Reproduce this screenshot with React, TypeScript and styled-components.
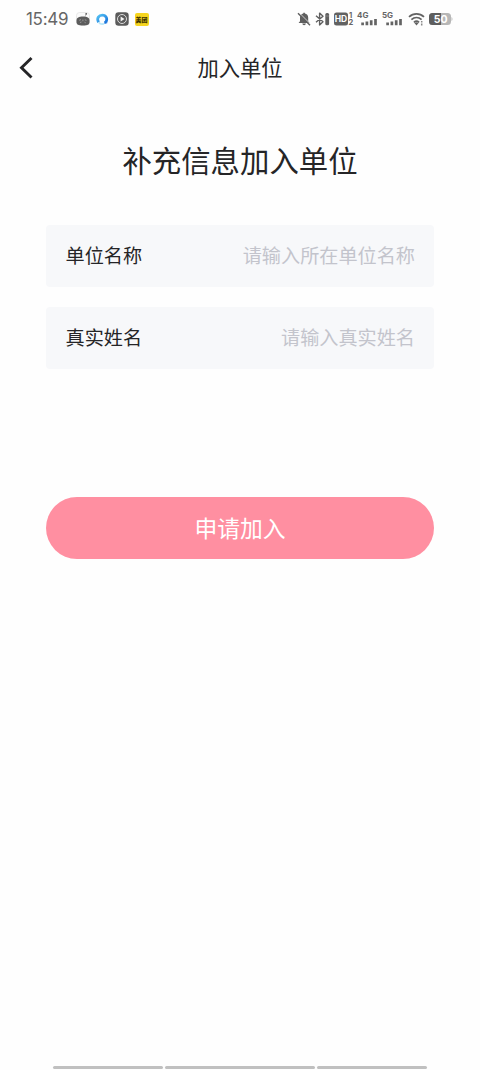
import React from "react";
import styled, { createGlobalStyle } from "styled-components";

const GlobalStyle = createGlobalStyle`
  * { box-sizing: border-box; }
  body { margin: 0; background: #fefefe; }
`;

const Screen = styled.div`
  width: 480px;
  height: 1070px;
  display: flex;
  flex-direction: column;
  background: #fefefe;
  color: #252527;
  font-family: "Noto Sans CJK SC", sans-serif;
  overflow: hidden;
`;

const StatusBar = styled.div`
  height: 38px;
  padding: 0 27px 0 26px;
  display: flex;
  align-items: center;
  justify-content: space-between;
`;

const StatusGroup = styled.div<{ $gap: number }>`
  display: flex;
  align-items: center;
  gap: ${(p) => p.$gap}px;
  svg { display: block; flex: none; }
`;

const Clock = styled.span`
  width: 43.5px;
  font: 400 17px/20px Inter, sans-serif;
  letter-spacing: -0.3px;
  color: #666;
  white-space: nowrap;
`;

const NewsBadge = styled.span`
  width: 14px;
  height: 13px;
  border-radius: 2px;
  background: #f6d51f;
  color: #3b3100;
  font: 900 6px/13px "Noto Sans CJK SC", sans-serif;
  text-align: center;
  white-space: nowrap;
`;

const NavBar = styled.header`
  height: 60px;
  padding: 0 19px;
  display: grid;
  grid-template-columns: 40px 1fr 40px;
  align-items: center;
`;

const BackButton = styled.button`
  padding: 0;
  border: 0;
  background: none;
  color: #252527;
  svg { display: block; }
`;

const NavTitle = styled.h1`
  margin: 0;
  padding-bottom: 2px;
  font-size: 21.3px;
  line-height: 32px;
  font-weight: 400;
  text-align: center;
`;

const Content = styled.main`
  flex: 1;
  padding: 39px 46px 0;
`;

const Heading = styled.h2`
  margin: 0 0 44px;
  font-size: 29.4px;
  line-height: 44px;
  font-weight: 400;
  text-align: center;
  white-space: nowrap;
`;

const Fields = styled.div`
  display: flex;
  flex-direction: column;
  gap: 20px;
`;

const Field = styled.label`
  height: 62px;
  padding: 0 19px 2px 19.5px;
  display: flex;
  align-items: center;
  justify-content: space-between;
  border-radius: 4px;
  background: #f7f8fa;
  font-size: 19.15px;
  line-height: 28px;
`;

const FieldInput = styled.input`
  width: 220px;
  padding: 0;
  border: 0;
  outline: 0;
  background: none;
  font: inherit;
  text-align: right;
  &::placeholder { color: #c3c4cc; opacity: 1; }
`;

const SubmitButton = styled.button`
  width: 100%;
  height: 62px;
  margin-top: 128px;
  padding: 0 0 1px;
  border: 0;
  border-radius: 32px;
  background: #ff8fa1;
  color: #fff;
  font: 400 22.8px/34px "Noto Sans CJK SC", sans-serif;
`;

const GestureBar = styled.footer`
  padding: 0 53px 1px;
  display: flex;
  gap: 2px;
`;

const GestureSegment = styled.span<{ $width: number }>`
  width: ${(p) => p.$width}px;
  height: 3px;
  border-radius: 2px;
  background: #c0c0c0;
`;

const RobotIcon = () => (
  <svg width="14" height="14" viewBox="0 0 14 14">
    <rect x=".5" y=".5" width="13" height="12.5" rx="3" fill="#fafafa" stroke="#e0e0e0" strokeWidth=".7" />
    <path d="M.5 8.600C.5 5.600 3 4.600 7 4.600s6.500 1 6.500 4v1.200c0 2.800-1.800 3.700-6.500 3.700s-6.500-.9-6.500-3.700z" fill="#5c5c5c" />
    <path d="m9.200 4.800.8-2.800" stroke="#999" strokeWidth=".6" />
    <circle cx="10.200" cy="1.800" r=".9" fill="#555" />
    <path d="m3.200 8.300 1.800-.7m3.800.2 1.700.5M4 10.500l1.500-.5m3 .2 1.200.6M6.900 7.500v1.800" stroke="#aaa" strokeWidth=".8" />
  </svg>
);

const BrowserIcon = () => (
  <svg width="13" height="13" viewBox="0 0 13 13">
    <defs>
      <linearGradient id="ring" x1="0" y1="0" x2="1" y2="1">
        <stop offset="0" stopColor="#55c2f3" />
        <stop offset="1" stopColor="#1773dc" />
      </linearGradient>
    </defs>
    <path d="M2.600 9.200C.2 5 3 2.200 6.300 2.200c3.800 0 5.600 3.500 3.500 7" fill="none" stroke="url(#ring)" strokeWidth="2.800" />
    <path d="M2.800 9.200c1.200 1.800 3.300 2.300 5.200 1.500" fill="none" stroke="#b9e8fa" strokeWidth="1.800" />
    <path d="m8 8 3.600 2-3 1z" fill="#1773dc" />
  </svg>
);

const PlayIcon = () => (
  <svg width="14" height="14" viewBox="0 0 14 14">
    <rect x=".3" y=".3" width="13.400" height="13.400" rx="3.200" fill="#5b5b5b" />
    <circle cx="7" cy="7" r="4.500" fill="none" stroke="#ddd" strokeWidth="1" />
    <path d="M5.600 4.600v4.800L9.500 7z" fill="#f6f6f6" />
  </svg>
);

const BellOffIcon = () => (
  <svg width="14" height="14" viewBox="0 0 14 14">
    <path d="M1.600 11 3 9.300V5.800c0-2.500 1.400-3.800 3.300-4.200V.8h1.600v.8c1.900.4 3.300 1.700 3.300 4.200v3.500L12.600 11zM5.300 11.600h3.600c-.2 1-.9 1.600-1.800 1.600s-1.600-.6-1.800-1.600" fill="#5f5f5f" />
    <path d="m2.300.9 11 11" stroke="#fefefe" strokeWidth=".8" />
    <path d="m1 1.200 12 12" stroke="#5f5f5f" strokeWidth="1.400" />
  </svg>
);

const BluetoothIcon = () => (
  <svg width="15" height="14" viewBox="0 0 15 14">
    <path d="m1 3.800 7 6-3.400 3.100V1.100L8 4.200l-7 6" fill="none" stroke="#606060" strokeWidth="1.400" strokeLinejoin="round" />
    <rect x="10.300" y="1" width="3.800" height="12.300" rx="1.500" fill="#606060" />
    <path d="M10.500 4h3.600" stroke="#999" strokeWidth=".7" />
  </svg>
);

const StatusLabel = styled.text`
  font-family: Inter, sans-serif;
  font-weight: 700;
`;

const HdIcon = () => (
  <svg width="20" height="18" viewBox="0 -2 20 18">
    <rect x="0" y=".5" width="14" height="13" rx="2.500" fill="#626262" />
    <StatusLabel x="7" y="10" fontSize="8.500" textAnchor="middle" fill="#fff">HD</StatusLabel>
    <StatusLabel x="15" y="6" fontSize="7.500" fill="#666">1</StatusLabel>
    <StatusLabel x="14.500" y="13.400" fontSize="7.500" fill="#666">2</StatusLabel>
  </svg>
);

const SignalIcon = ({ label }: { label: string }) => (
  <svg width="21" height="18" viewBox="0 -2 21 18">
    <StatusLabel x="-1" y="6.400" fontSize="8" fill="#666">{label}</StatusLabel>
    <path d="M4.600 10.500v2.800M8.900 9.500v3.800M13.200 8.200v5.100M17.500 7v6.300" stroke="#646464" strokeWidth="2.700" />
  </svg>
);

const SignalGroup = styled(StatusGroup)`
  svg { overflow: visible; }
`;

const WifiIcon = () => (
  <svg width="17" height="14" viewBox="0 0 17 14">
    <path d="M1 4.900c4.400-4.100 10.600-4.100 15 0M3.400 7.700c3-2.700 7.200-2.700 10.200 0M5.900 10.300c1.600-1.300 3.600-1.300 5.200 0" fill="none" stroke="#636363" strokeWidth="1.700" />
    <path d="m6.400 11 2.100 2.400 2.100-2.400c-1.300-1-2.900-1-4.200 0" fill="#636363" />
    <path d="M13.700 9v1.500m0 1v2" stroke="#888" strokeWidth="1.500" />
  </svg>
);

const BatteryIcon = () => (
  <svg width="24" height="14" viewBox="0 0 24 14">
    <rect x="0" y="1" width="22" height="12" rx="3.500" fill="#b7b7b7" />
    <path d="M12 1H3.500A3.500 3.500 0 0 0 0 4.500v5A3.500 3.500 0 0 0 3.500 13H12z" fill="#5e5e5e" />
    <path d="M22.500 5c1.300.5 1.300 3.500 0 4z" fill="#b7b7b7" />
    <StatusLabel x="11.600" y="10.900" fontSize="10.500" textAnchor="middle" fill="#fff">50</StatusLabel>
  </svg>
);

const fields = [
  { label: "单位名称", placeholder: "请输入所在单位名称" },
  { label: "真实姓名", placeholder: "请输入真实姓名" },
];

export default function App() {
  return (
    <Screen>
      <GlobalStyle />
      <StatusBar>
        <StatusGroup $gap={6}>
          <Clock>15:49</Clock>
          <RobotIcon />
          <BrowserIcon />
          <PlayIcon />
          <NewsBadge>美团</NewsBadge>
        </StatusGroup>
        <SignalGroup $gap={4}>
          <BellOffIcon />
          <BluetoothIcon />
          <HdIcon />
          <SignalIcon label="4G" />
          <SignalIcon label="5G" />
          <WifiIcon />
          <BatteryIcon />
        </SignalGroup>
      </StatusBar>
      <NavBar>
        <BackButton aria-label="返回">
          <svg width="15" height="24" viewBox="0 0 15 24">
            <path d="M12.500 2 2.500 11.700l10 9.800" fill="none" stroke="currentColor" strokeWidth="2.900" />
          </svg>
        </BackButton>
        <NavTitle>加入单位</NavTitle>
      </NavBar>
      <Content>
        <Heading>补充信息加入单位</Heading>
        <Fields>
          {fields.map((f) => (
            <Field key={f.label}>
              <span>{f.label}</span>
              <FieldInput placeholder={f.placeholder} />
            </Field>
          ))}
        </Fields>
        <SubmitButton>申请加入</SubmitButton>
      </Content>
      <GestureBar>
        <GestureSegment $width={110} />
        <GestureSegment $width={151} />
        <GestureSegment $width={110} />
      </GestureBar>
    </Screen>
  );
}
